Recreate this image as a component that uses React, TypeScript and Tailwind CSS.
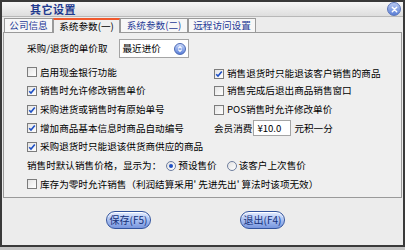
import React from 'react';

const font = "font-['Noto_Sans_CJK_SC',sans-serif]";

function Check({ checked }: { checked?: boolean }) {
  return (
    <span className="flex h-[10px] w-[10px] shrink-0 items-center justify-center border border-[#7c7c7c] bg-gradient-to-br from-[#e4e4e4] to-white">
      {checked && (
        <svg viewBox="0 0 8 8" className="h-[8px] w-[8px]">
          <path d="M1.2 4.2l1.8 1.9 3.8-4.6" fill="none" stroke="#1d4fc4" strokeWidth="1.6" />
        </svg>
      )}
    </span>
  );
}

function CheckRow({ label, checked }: { label: string; checked?: boolean }) {
  return (
    <div className="flex items-center gap-[3px] whitespace-nowrap">
      <Check checked={checked} />
      <span>{label}</span>
    </div>
  );
}

function Radio({ checked }: { checked?: boolean }) {
  return (
    <span className="flex h-[10px] w-[10px] shrink-0 items-center justify-center rounded-full border border-[#6f7f9f] bg-gradient-to-br from-[#e2e2e2] to-white">
      {checked && <span className="h-[4px] w-[4px] rounded-full bg-[#1d4fc4]" />}
    </span>
  );
}

function Tab({ label, active, width }: { label: string; active?: boolean; width: string }) {
  return (
    <div
      className={`${width} flex h-[14px] items-center justify-center border border-b-0 border-[#9a9a9a] ${
        active
          ? 'relative z-10 -mb-px h-[15px] border-t-2 border-t-[#f0582c] bg-[#efefef] text-black'
          : 'bg-[#f7f7f7] text-[#1f3a96]'
      }`}
    >
      {label}
    </div>
  );
}

function PillButton({ label }: { label: string }) {
  return (
    <button className="flex h-[18px] w-[45px] items-center justify-center rounded-full border border-[#33549e] bg-gradient-to-b from-[#e4ecff] via-[#a9c0f2] to-[#7896de] text-[10px] leading-none text-[#14307a] shadow-[inset_0_1px_0_#ffffff]">
      {label}
    </button>
  );
}

export default function App() {
  return (
    <div className={`h-[250px] w-[405px] bg-[#c4c4c4] ${font} text-[9.6px] leading-none text-black`}>
      <div className="flex h-[247px] w-[405px] flex-col border-2 border-[#3a3a3a] bg-[#ececec]">
        {/* Title bar */}
        <div className="flex h-[15px] items-center justify-between border-b border-[#b8b8b8] bg-gradient-to-b from-[#f7f7f7] to-[#dedede] pl-[28px] pr-[2px]">
          <span className="text-[11px] font-bold tracking-[0.5px] text-[#1f3a8f]">其它设置</span>
          <span className="flex h-[14px] w-[14px] items-center justify-center rounded-full border border-[#5a74b8] bg-gradient-to-b from-[#b9c9f2] to-[#5b7fd6]">
            <svg viewBox="0 0 8 8" className="h-[7px] w-[7px]">
              <path d="M1.5 1.5l5 5M6.5 1.5l-5 5" stroke="white" strokeWidth="1.7" strokeLinecap="round" />
            </svg>
          </span>
        </div>

        {/* Tabs */}
        <div className="flex items-end pl-[2px] pt-px">
          <Tab label="公司信息" width="w-[49px]" />
          <Tab label="系统参数(一)" width="w-[67px]" active />
          <Tab label="系统参数(二)" width="w-[68px]" />
          <Tab label="远程访问设置" width="w-[68px]" />
        </div>

        {/* Panel */}
        <div className="mx-px flex h-[166px] flex-col border border-[#9a9a9a] bg-[#efefef] pl-[23px] pt-[6px]">
          <div className="flex h-[19px] items-center">
            <span>采购/退货的单价取</span>
            <div className="ml-[11px] flex h-[19px] w-[70px] items-center justify-between border border-[#a4a4a4] bg-white pl-[3px] pr-[2px]">
              <span>最近进价</span>
              <span className="flex h-[12px] w-[12px] items-center justify-center rounded-full border border-[#4a68b4] bg-gradient-to-b from-[#c9d7fa] to-[#5c80d8]">
                <svg viewBox="0 0 8 8" className="h-[8px] w-[8px]">
                  <path d="M2.3 3.3L4 1.6l1.7 1.7M2.3 4.7L4 6.4l1.7-1.7" fill="none" stroke="white" strokeWidth="1.1" />
                </svg>
              </span>
            </div>
          </div>

          <div className="mt-[5px] grid grid-cols-[187px_1fr] auto-rows-[18.7px] items-center">
            <CheckRow label="启用现金银行功能" />
            <div className="mt-[3px]">
              <CheckRow label="销售退货时只能退该客户销售的商品" checked />
            </div>
            <CheckRow label="销售时允许修改销售单价" checked />
            <CheckRow label="销售完成后退出商品销售窗口" />
            <CheckRow label="采购进货或销售时有原始单号" checked />
            <CheckRow label="POS销售时允许修改单价" />
            <CheckRow label="增加商品基本信息时商品自动编号" checked />
            <div className="flex items-center">
              <span>会员消费</span>
              <span className="ml-px flex h-[16px] w-[38px] items-center border border-[#a4a4a4] bg-white pl-[3px]">¥10.0</span>
              <span className="ml-[3px]">元积一分</span>
            </div>
            <div className="col-span-2">
              <CheckRow label="采购退货时只能退该供货商供应的商品" checked />
            </div>
            <div className="col-span-2 flex items-center whitespace-nowrap">
              <span>销售时默认销售价格，显示为：</span>
              <span className="ml-[5px] flex items-center gap-[2px]">
                <Radio checked />
                <span>预设售价</span>
              </span>
              <span className="ml-[10px] flex items-center gap-[2px]">
                <Radio />
                <span>该客户上次售价</span>
              </span>
            </div>
            <div className="col-span-2">
              <CheckRow label="库存为零时允许销售（利润结算采用' 先进先出' 算法时该项无效）" />
            </div>
          </div>
        </div>

        {/* Buttons */}
        <div className="flex pl-[104px] pt-[13px] gap-[89px]">
          <PillButton label="保存(F5)" />
          <PillButton label="退出(F4)" />
        </div>
      </div>
    </div>
  );
}
